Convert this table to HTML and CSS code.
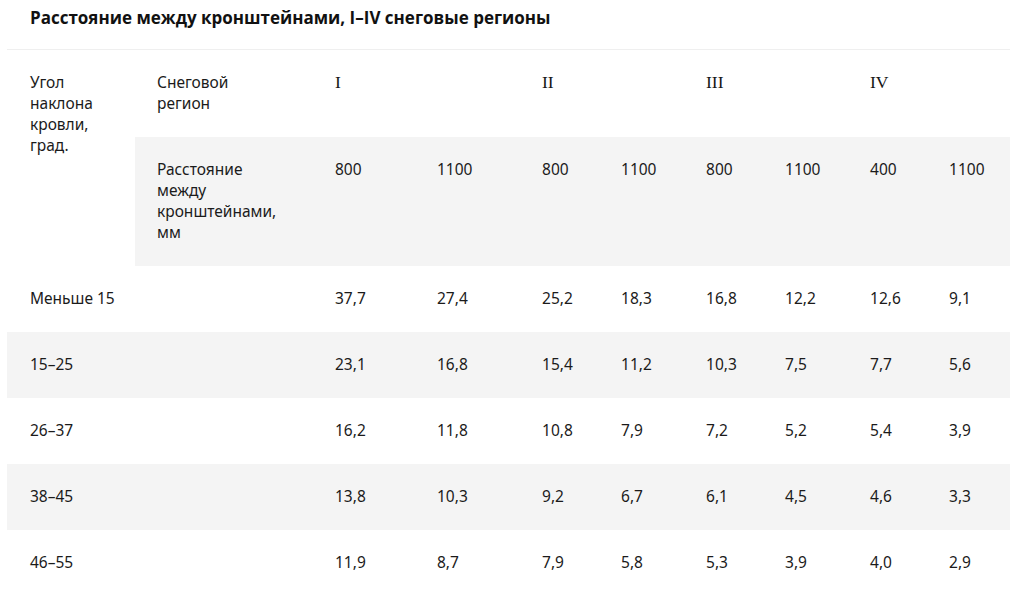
FILE: index.html
```html
<!DOCTYPE html>
<html lang="ru">
<head>
<meta charset="utf-8">
<title>Расстояние между кронштейнами</title>
<link rel="stylesheet" href="styles.css">
</head>
<body>
<div class="page">
  <h2 class="title">Расстояние между кронштейнами, I–IV снеговые регионы</h2>
  <table class="grid">
    <colgroup>
      <col class="c0"><col class="c1"><col class="c2"><col class="c3"><col class="c4"><col class="c5"><col class="c6"><col class="c7"><col class="c8"><col class="c9">
    </colgroup>
    <tbody>
      <tr class="head">
        <td rowspan="2">Угол<br>наклона<br>кровли,<br>град.</td>
        <td>Снеговой<br>регион</td>
        <td colspan="2"><span class="roman">I</span></td>
        <td colspan="2"><span class="roman">II</span></td>
        <td colspan="2"><span class="roman">III</span></td>
        <td colspan="2"><span class="roman">IV</span></td>
      </tr>
      <tr class="head alt">
        <td>Расстояние<br>между<br>кронштейнами,<br>мм</td>
        <td>800</td><td>1100</td><td>800</td><td>1100</td><td>800</td><td>1100</td><td>400</td><td>1100</td>
      </tr>
      <tr><td>Меньше 15</td><td></td><td>37,7</td><td>27,4</td><td>25,2</td><td>18,3</td><td>16,8</td><td>12,2</td><td>12,6</td><td>9,1</td></tr>
      <tr class="alt"><td>15–25</td><td></td><td>23,1</td><td>16,8</td><td>15,4</td><td>11,2</td><td>10,3</td><td>7,5</td><td>7,7</td><td>5,6</td></tr>
      <tr><td>26–37</td><td></td><td>16,2</td><td>11,8</td><td>10,8</td><td>7,9</td><td>7,2</td><td>5,2</td><td>5,4</td><td>3,9</td></tr>
      <tr class="alt"><td>38–45</td><td></td><td>13,8</td><td>10,3</td><td>9,2</td><td>6,7</td><td>6,1</td><td>4,5</td><td>4,6</td><td>3,3</td></tr>
      <tr><td>46–55</td><td></td><td>11,9</td><td>8,7</td><td>7,9</td><td>5,8</td><td>5,3</td><td>3,9</td><td>4,0</td><td>2,9</td></tr>
    </tbody>
  </table>
</div>
</body>
</html>
```

FILE: styles.css
```css
html, body {
  margin: 0;
  padding: 0;
  background: #ffffff;
}
.page {
  padding: 0 0 0 7px;
  width: 1004px;
  color: #1b1b1b;
  font-family: "Noto Sans", "Open Sans", sans-serif;
}
.title {
  margin: 0;
  padding: 6px 0 0 23px;
  height: 49px;
  box-sizing: border-box;
  font-family: "Open Sans", "Noto Sans", sans-serif;
  font-weight: 700;
  font-size: 17px;
  line-height: 24px;
  color: #111111;
}
.grid {
  width: 1003px;
  border-collapse: collapse;
  table-layout: fixed;
  border-top: 1px solid #efefef;
  font-size: 15.5px;
  line-height: 21px;
}
.grid td {
  padding: 22px 0 23px 22px;
  vertical-align: top;
  text-align: left;
}
.grid tr > td:first-child { padding-left: 23px; }
.grid tr.alt td { background: #f4f4f4; }
.grid tr.head.alt td:first-child { padding-left: 22px; }
.c0 { width: 128px; }
.c1 { width: 178px; }
.c2 { width: 102px; }
.c3 { width: 105px; }
.c4 { width: 79px; }
.c5 { width: 85px; }
.c6 { width: 79px; }
.c7 { width: 85px; }
.c8 { width: 79px; }
.c9 { width: 83px; }
.roman {
  font-family: "Liberation Serif", "DejaVu Serif", serif;
  font-size: 17.5px;
  color: #161616;
}
```
